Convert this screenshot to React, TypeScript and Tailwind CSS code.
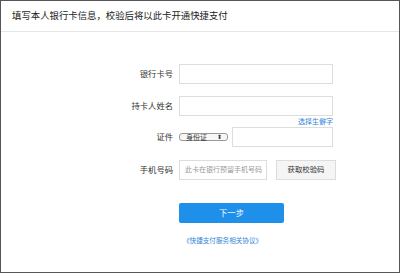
import React from "react";

const font = "font-['Liberation_Sans','Noto_Sans_CJK_SC',sans-serif]";

const Label: React.FC<{ children: React.ReactNode }> = ({ children }) => (
  <div className="w-[178px] shrink-0 pr-[6px] text-right text-[8.3px] text-[#333]">
    {children}
  </div>
);

const App: React.FC = () => {
  return (
    <div className={`${font} w-[400px] h-[273px] border border-[#555] bg-white overflow-hidden`}>
      {/* HEADER */}
      <div className="h-[31px] border-b border-[#e6e6e6] flex items-center pl-[11px] text-[9.4px] text-[#222]">
        填写本人银行卡信息，校验后将以此卡开通快捷支付
      </div>

      {/* FORM */}
      <div className="flex flex-col pt-[32px]">
        <div className="flex items-center h-[20px]">
          <Label>银行卡号</Label>
          <div className="w-[154px] h-[20px] border border-[#ddd]" />
        </div>

        <div className="flex items-center h-[20px] mt-[12px]">
          <Label>持卡人姓名</Label>
          <div className="w-[154px] h-[20px] border border-[#ddd]" />
        </div>
        <div className="flex justify-end w-[332px] h-[10px] items-center">
          <span className="text-[7px] text-[#2f86d8] leading-none">选择生僻字</span>
        </div>

        <div className="flex items-center h-[20px] mt-[1px]">
          <Label>证件</Label>
          <div className="w-[49px] h-[8px] rounded-[3px] border border-[#999] bg-[#f7f7f7] flex items-center justify-between pl-[6px] pr-[5px] text-[7px] leading-none text-[#333]">
            <span>身份证</span>
            <span className="text-[6px]">⬍</span>
          </div>
          <div className="ml-[4px] w-[101px] h-[20px] border border-[#ddd]" />
        </div>

        <div className="flex items-center h-[20px] mt-[13px]">
          <Label>手机号码</Label>
          <div className="w-[88px] h-[20px] border border-[#ddd] flex items-center pl-[5px] text-[7px] text-[#999]">
            此卡在银行预留手机号码
          </div>
          <div className="ml-[9px] w-[60px] h-[20px] border border-[#ddd] bg-[#f5f5f5] flex items-center justify-center text-[7.4px] text-[#333]">
            获取校验码
          </div>
        </div>

        <div className="flex mt-[23px]">
          <div className="w-[178px] shrink-0" />
          <div className="w-[105px] h-[20px] rounded-[2px] bg-[#1e90ea] flex items-center justify-center text-[8.3px] text-white">
            下一步
          </div>
        </div>

        <div className="flex mt-[13px]">
          <div className="w-[182px] shrink-0" />
          <span className="text-[6.6px] text-[#2f86d8]">《快捷支付服务相关协议》</span>
        </div>
      </div>
    </div>
  );
};

export default App;
